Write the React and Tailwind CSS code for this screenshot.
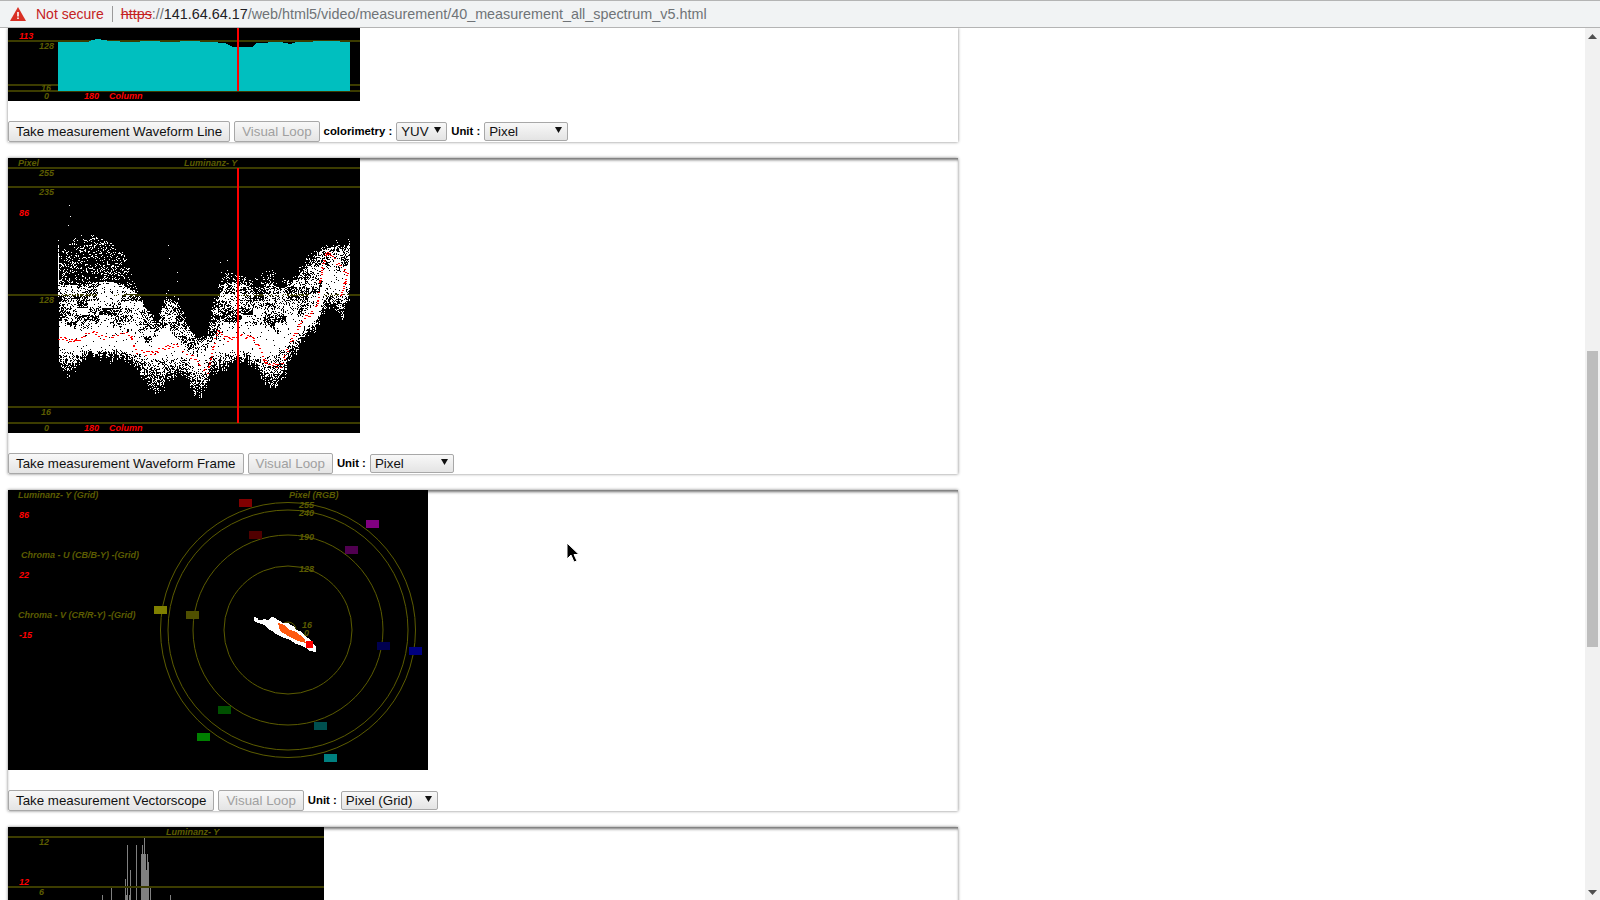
import { useMemo } from "react";

const OLIVE_LINE = "#3c3c00";

// keypoints read off the reference: x, sparse top, cloud top, band top, band bottom, bottom (zoomed px)
const envelope = [
  [25, 90, 175, 280, 375, 420],
  [60, 50, 180, 300, 375, 445],
  [90, 30, 180, 310, 375, 400],
  [130, 30, 170, 300, 375, 385],
  [175, 50, 170, 290, 370, 395],
  [220, 80, 180, 310, 370, 395],
  [260, 195, 205, 320, 385, 430],
  [290, 250, 255, 360, 395, 480],
  [320, 280, 290, 320, 400, 500],
  [350, 200, 220, 300, 395, 470],
  [380, 200, 240, 330, 400, 440],
  [410, 290, 300, 375, 400, 460],
  [440, 340, 345, 385, 430, 520],
  [470, 330, 340, 365, 400, 480],
  [490, 210, 230, 335, 380, 440],
  [530, 130, 170, 320, 380, 420],
  [565, 150, 170, 290, 375, 400],
  [610, 160, 190, 290, 385, 410],
  [660, 130, 170, 300, 395, 490],
  [690, 150, 190, 320, 370, 480],
  [720, 170, 180, 280, 350, 400],
  [760, 100, 130, 270, 310, 345],
  [800, 70, 80, 220, 280, 300],
  [830, 60, 70, 130, 170, 250],
  [860, 45, 60, 130, 200, 250],
  [880, 60, 80, 140, 200, 270],
  [898, 35, 50, 100, 170, 220],
];

const redTrace = [
  [25, 340], [60, 345], [90, 345], [110, 318], [130, 320], [150, 335], [180, 345], [200, 325], [240, 330],
  [255, 380], [300, 385], [350, 365], [385, 360], [400, 392], [430, 395], [470, 440], [500, 320], [530, 340],
  [565, 335], [600, 330], [625, 370], [650, 420], [690, 420], [720, 350], [750, 295], [800, 240], [815, 120],
  [830, 75], [850, 100], [890, 150], [870, 210],
];

// stray dots above the cloud, screen pixels
const strayDots = [
  [69, 205], [70, 216], [68, 225], [168, 245], [169, 258], [177, 272], [177, 281], [220, 262], [227, 260],
  [221, 272], [223, 285], [168, 290], [118, 274],
];

const lerp = (a, b, t) => a + (b - a) * t;

function makeRandom(seed) {
  let s = seed;
  return () => {
    s = (s * 1664525 + 1013904223) % 4294967296;
    return s / 4294967296;
  };
}

function envelopeAt(px) {
  for (let i = 0; i < envelope.length - 1; i += 1) {
    const a = envelope[i];
    const b = envelope[i + 1];
    if (px >= a[0] && px <= b[0]) {
      const t = (px - a[0]) / (b[0] - a[0]);
      return a.map((v, k) => lerp(v, b[k], t));
    }
  }
  return envelope[envelope.length - 1];
}

function buildCloud() {
  const random = makeRandom(4711);
  const clump = {};
  const clumpAt = (x, y) => {
    const key = `${Math.floor(x / 11)}:${Math.floor(y / 7)}`;
    if (clump[key] === undefined) clump[key] = 0.35 + random() * 1.2;
    return clump[key];
  };
  let white = "";
  // one svg unit is one screen pixel, x 58..350 and y 225..405 on screen
  for (let x = 58; x <= 349; x += 1) {
    const [, sparse, cloud, bandTop, bandBottom, bottom] = envelopeAt((x - 50) * 3);
    const toY = (py) => 225 + py / 3;
    // rough up the edges column by column, the real trace is never smooth
    const topEdge = toY(bandTop) + (random() - 0.5) * 8;
    const lowEdge = toY(bandBottom) + (random() - 0.5) * 5;
    const end = Math.round(toY(bottom) + (random() - 0.5) * 12);
    let runStart = -1;
    for (let y = Math.round(toY(sparse)); y <= end; y += 1) {
      let density = 0.17 * clumpAt(x, y);
      if (y >= lowEdge) density = 0.85 - (0.6 * (y - lowEdge)) / Math.max(end - lowEdge, 1);
      else if (y >= topEdge) density = 0.98;
      else if (y >= toY(cloud)) density = 0.62 * clumpAt(x, y);
      if (Math.hypot((x - 109) / 13, (y - 292) / 11) < 1) density = 0.93;
      const on = random() < density;
      if (on && runStart < 0) runStart = y;
      if (!on && runStart >= 0) {
        white += `M${x + 0.5} ${runStart}V${y}`;
        runStart = -1;
      }
    }
    if (runStart >= 0) white += `M${x + 0.5} ${runStart}V${end + 1}`;
  }
  strayDots.forEach(([x, y]) => {
    white += `M${x + 0.5} ${y}v1`;
  });
  let red = "";
  for (let i = 0; i < redTrace.length - 1; i += 1) {
    const [ax, ay] = redTrace[i];
    const [bx, by] = redTrace[i + 1];
    const steps = Math.ceil(Math.hypot(bx - ax, by - ay) / 4);
    for (let k = 0; k < steps; k += 1) {
      if (random() < 0.42) continue;
      const x = Math.round(50 + lerp(ax, bx, k / steps) / 3);
      const y = Math.round(225 + lerp(ay, by, k / steps) / 3 + (random() - 0.5) * 5);
      red += `M${x} ${y}h2v1h-2z`;
    }
  }
  return { white, red };
}

const cyanProfile = [
  [58, 42], [88, 42], [92, 40], [98, 39], [110, 41], [130, 42], [150, 41], [170, 42], [190, 41], [210, 42], [225, 43],
  [233, 47], [252, 47], [256, 43], [280, 42], [290, 44], [296, 42], [330, 41], [350, 42],
];

function Label({ x, y, red, children }) {
  return (
    <text x={x} y={y} className={`text-[9px] font-bold italic ${red ? "fill-[#ff0000]" : "fill-[#5c5c00]"}`}>
      {children}
    </text>
  );
}

function WaveformLine() {
  const points = cyanProfile.map(([x, y]) => `${x},${y}`).join(" ");
  return (
    <svg width="352" height="73" viewBox="8 28 352 73" className="block bg-black" shapeRendering="crispEdges">
      <path d="M0 41H360M0 85H360M0 91H360" stroke={OLIVE_LINE} strokeWidth="2" />
      <polygon points={`58,91 ${points} 350,91`} fill="#00bfbf" />
      <path d="M238 28V91" stroke="#ff0000" strokeWidth="2" />
      <Label x={19} y={39} red>113</Label>
      <Label x={39} y={49}>128</Label>
      <Label x={41} y={91}>16</Label>
      <Label x={44} y={99}>0</Label>
      <Label x={84} y={99} red>180</Label>
      <Label x={109} y={99} red>Column</Label>
    </svg>
  );
}

function WaveformFrame() {
  const cloud = useMemo(buildCloud, []);
  return (
    <svg width="352" height="275" viewBox="8 158 352 275" className="block bg-black" shapeRendering="crispEdges">
      <path d="M0 168H360M0 187H360M0 295H360M0 407H360M0 423H360" stroke={OLIVE_LINE} strokeWidth="2" />
      <path d={cloud.white} stroke="#ffffff" fill="none" />
      <path d={cloud.red} fill="#ff0000" />
      <path d="M238 168V423" stroke="#ff0000" strokeWidth="2" />
      <Label x={18} y={166}>Pixel</Label>
      <Label x={184} y={166}>Luminanz- Y</Label>
      <Label x={39} y={176}>255</Label>
      <Label x={39} y={195}>235</Label>
      <Label x={19} y={216} red>86</Label>
      <Label x={39} y={303}>128</Label>
      <Label x={41} y={415}>16</Label>
      <Label x={44} y={431}>0</Label>
      <Label x={84} y={431} red>180</Label>
      <Label x={109} y={431} red>Column</Label>
    </svg>
  );
}

const scopeMarks = [
  [239, 499, "#800000"],
  [249, 531, "#500000"],
  [366, 520, "#800080"],
  [345, 546, "#500050"],
  [154, 606, "#808000"],
  [186, 611, "#505000"],
  [409, 647, "#000080"],
  [377, 642, "#000050"],
  [197, 733, "#008000"],
  [218, 706, "#005000"],
  [324, 754, "#008080"],
  [314, 722, "#005050"],
];

function Vectorscope() {
  return (
    <svg width="420" height="280" viewBox="8 490 420 280" className="block bg-black">
      {[127.5, 120, 95, 64, 8].map((r) => (
        <circle key={r} cx="288" cy="630" r={r} fill="none" stroke="#5c5c00" />
      ))}
      {scopeMarks.map(([x, y, color]) => (
        <rect key={`${x}-${y}`} x={x} y={y} width="13" height="8" fill={color} shapeRendering="crispEdges" />
      ))}
      <polygon
        shapeRendering="crispEdges"
        points="254,617 258,618 258,620 262,620 263,619 268,620 272,617 276,618 277,620 281,621 282,623 288,623 290,625 294,626 296,630 300,631 305,636 310,639 312,643 316,646 316,652 310,651 306,648 300,645 296,644 290,640 282,637 276,634 272,631 268,629 264,625 258,623 254,621"
        fill="#ffffff"
      />
      <polygon shapeRendering="crispEdges" points="278,623 284,625 288,629 296,632 304,638 306,643 298,641 288,636 280,631" fill="#ff5a10" />
      <rect x="306" y="641" width="7" height="7" fill="#ff0000" />
      <Label x={18} y={498}>Luminanz- Y (Grid)</Label>
      <Label x={289} y={498}>Pixel (RGB)</Label>
      <Label x={19} y={518} red>86</Label>
      <Label x={21} y={558}>Chroma - U (CB/B-Y) -(Grid)</Label>
      <Label x={19} y={578} red>22</Label>
      <Label x={18} y={618}>Chroma - V (CR/R-Y) -(Grid)</Label>
      <Label x={19} y={638} red>-15</Label>
      <Label x={299} y={508}>255</Label>
      <Label x={299} y={516}>240</Label>
      <Label x={299} y={540}>190</Label>
      <Label x={299} y={572}>128</Label>
      <Label x={302} y={628}>16</Label>
      <Label x={304} y={636}>0</Label>
    </svg>
  );
}

const histogramBars = [
  [102, 895, 1], [111, 887, 1], [125, 879, 1], [125, 895, 3], [127, 845, 1], [129, 895, 2], [130, 870, 1],
  [136, 845, 1], [141, 854, 4], [142, 845, 1], [144, 837, 1], [145, 854, 1], [146, 870, 3], [147, 854, 1],
  [148, 862, 1], [150, 887, 1], [170, 895, 1],
];

function Histogram() {
  return (
    <svg width="316" height="73" viewBox="8 827 316 73" className="block bg-black" shapeRendering="crispEdges">
      {histogramBars.map(([x, y, w]) => (
        <rect key={`${x}-${y}`} x={x} y={y} width={w} height={900 - y} fill="#808080" />
      ))}
      <path d="M0 837H330M0 887H330" stroke={OLIVE_LINE} strokeWidth="2" />
      <Label x={166} y={835}>Luminanz- Y</Label>
      <Label x={39} y={845}>12</Label>
      <Label x={19} y={885} red>12</Label>
      <Label x={39} y={895}>6</Label>
    </svg>
  );
}

function Button({ children, disabled }) {
  return (
    <button
      type="button"
      disabled={disabled}
      className={`h-[21px] shrink-0 rounded-[2px] border border-[#a8a8a8] bg-gradient-to-b from-[#f8f8f8] to-[#e4e4e4] px-[7px] text-[13.33px] leading-none ${
        disabled ? "text-[#a0a0a0]" : "text-[#111111]"
      }`}
    >
      {children}
    </button>
  );
}

function Dropdown({ value, widthClass }) {
  return (
    <span
      className={`flex h-[19px] shrink-0 items-center justify-between rounded-[2px] border border-[#a8a8a8] bg-gradient-to-b from-[#f8f8f8] to-[#e4e4e4] pl-[4px] pr-[5px] text-[13.33px] text-[#111111] ${widthClass}`}
    >
      {value}
      <svg width="7" height="6" viewBox="0 0 7 6" className="mb-[3px]">
        <path d="M0 0H7L3.5 6Z" fill="#111111" />
      </svg>
    </span>
  );
}

function FieldLabel({ children }) {
  return <span className="shrink-0 text-[11.33px] font-bold text-black">{children}</span>;
}

function Panel({ children, controls, scrolledOff }) {
  return (
    <section
      className={`ml-[8px] w-[950px] ${
        scrolledOff ? "shadow-[0_0_3px_#808080]" : "shadow-[inset_0_3px_3px_-1px_#707070,0_0_3px_#808080]"
      }`}
    >
      {children}
      <div className="mt-5 flex h-[21px] items-center gap-1">{controls}</div>
    </section>
  );
}

function AddressBar() {
  return (
    <header className="flex h-[28px] shrink-0 items-center border-y border-y-[#b4b4b4] bg-[#f1f3f4] pl-[10px] text-[14px]">
      <svg width="16" height="14" viewBox="0 0 16 14">
        <path d="M8 0L16 14H0Z" fill="#d93025" />
        <path d="M7.2 5H8.8V9.5H7.2ZM7.2 10.5H8.8V12H7.2Z" fill="#ffffff" />
      </svg>
      <span className="ml-[10px] text-[#c5221f]">Not secure</span>
      <span className="ml-[8px] h-[16px] w-px bg-[#9a9a9a]" />
      <span className="ml-[8px] mt-[2px] flex text-[14.37px]">
        <span className="text-[#c5221f] line-through">https</span>
        <span className="text-[#6f7377]">://</span>
        <span className="text-[#202124]">141.64.64.17</span>
        <span className="text-[#6f7377]">/web/html5/video/measurement/40_measurement_all_spectrum_v5.html</span>
      </span>
    </header>
  );
}

function Scrollbar() {
  return (
    <aside className="flex w-[15px] shrink-0 flex-col items-center bg-[#f1f1f1]">
      <svg width="9" height="5" viewBox="0 0 9 5" className="mt-[6px] shrink-0">
        <path d="M4.5 0L9 5H0Z" fill="#505050" />
      </svg>
      <div className="mt-[312px] h-[296px] w-[11px] shrink-0 bg-[#bdbdbd]" />
      <svg width="9" height="5" viewBox="0 0 9 5" className="mt-auto mb-[5px] shrink-0">
        <path d="M0 0H9L4.5 5Z" fill="#505050" />
      </svg>
    </aside>
  );
}

export default function App() {
  return (
    <div className="relative flex h-[900px] w-[1600px] flex-col overflow-hidden bg-white font-['Liberation_Sans',Arial,sans-serif]">
      <AddressBar />
      <div className="flex min-h-0 flex-1">
        <main className="flex min-w-0 flex-1 flex-col gap-4 overflow-hidden">
          <Panel
            scrolledOff
            controls={
              <>
                <Button>Take measurement Waveform Line</Button>
                <Button disabled>Visual Loop</Button>
                <FieldLabel>colorimetry :</FieldLabel>
                <Dropdown value="YUV" widthClass="w-[51px]" />
                <FieldLabel>Unit :</FieldLabel>
                <Dropdown value="Pixel" widthClass="w-[84px]" />
              </>
            }
          >
            <WaveformLine />
          </Panel>
          <Panel
            controls={
              <>
                <Button>Take measurement Waveform Frame</Button>
                <Button disabled>Visual Loop</Button>
                <FieldLabel>Unit :</FieldLabel>
                <Dropdown value="Pixel" widthClass="w-[84px]" />
              </>
            }
          >
            <WaveformFrame />
          </Panel>
          <Panel
            controls={
              <>
                <Button>Take measurement Vectorscope</Button>
                <Button disabled>Visual Loop</Button>
                <FieldLabel>Unit :</FieldLabel>
                <Dropdown value="Pixel (Grid)" widthClass="w-[97px]" />
              </>
            }
          >
            <Vectorscope />
          </Panel>
          <Panel controls={null}>
            <Histogram />
          </Panel>
        </main>
        <Scrollbar />
      </div>
      {/* mouse pointer caught in the screenshot */}
      <svg width="14" height="22" viewBox="0 0 14 22" className="absolute left-[566px] top-[542px]">
        <path d="M1 1V17L5 13L8 20L11 19L8 12.5H13Z" fill="#000000" stroke="#ffffff" strokeWidth="1" />
      </svg>
    </div>
  );
}
